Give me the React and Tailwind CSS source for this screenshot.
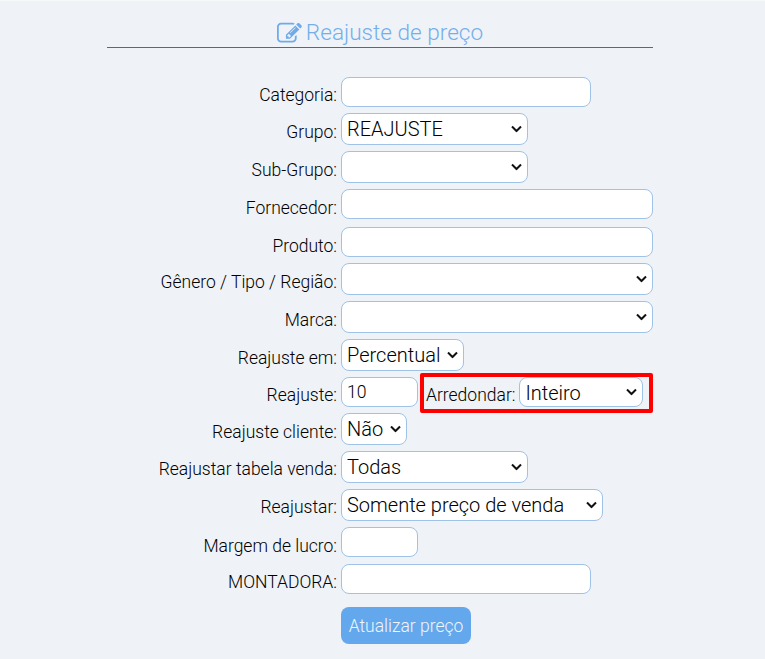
const inputCls = 'h-[30px] rounded-lg border border-[#9fc3e6] bg-white px-[5px] text-[17.6px] font-light text-black outline-none'
const selectCls = 'h-full w-full appearance-none rounded-lg border border-[#9fc3e6] bg-white pl-[5px] text-[20px] font-light text-black outline-none'

function EditIcon() {
  return (
    <svg viewBox="0 0 1792 1792" className="h-[25px] w-[25px] fill-[#6fabeb]">
      <path d="M888 1184l116-116-152-152-116 116v56h96v96h56zm440-720q-16-16-33 1l-350 350q-17 17-1 33t33-1l350-350q17-17 1-33zm80 594v190q0 119-84.5 203.5t-203.5 84.5h-832q-119 0-203.5-84.5t-84.5-203.5v-832q0-119 84.5-203.5t203.5-84.5h832q63 0 117 25 15 7 18 23 3 17-9 29l-49 49q-14 14-32 8-23-6-45-6h-832q-66 0-113 47t-47 113v832q0 66 47 113t113 47h832q66 0 113-47t47-113v-126q0-13 9-22l64-64q15-15 35-7t20 29zm-96-738l288 288-672 672h-288v-288zm444 132l-92 92-288-288 92-92q28-28 68-28t68 28l152 152q28 28 28 68t-28 68z" />
    </svg>
  )
}

function Row({ label, children, className = '', labelPad = 'pt-[7px]' }) {
  return (
    <div className={'flex items-start ' + className}>
      <label className={'h-[30px] w-[234px] shrink-0 pr-[4px] text-right text-[17.5px] leading-[24px] font-light text-black ' + labelPad}>{label}</label>
      {children}
    </div>
  )
}

function Select({ width, value, options = [''], className = 'h-[32px]', textPad = 'pb-[4px]' }) {
  return (
    <div className={'relative shrink-0 ' + width + ' ' + className}>
      <select className={selectCls + ' ' + textPad} defaultValue={value}>
        {options.map(o => <option key={o}>{o}</option>)}
      </select>
      <svg viewBox="0 0 11 7" className="pointer-events-none absolute top-1/2 right-[6px] h-[7px] w-[11px] -translate-y-1/2 fill-none stroke-[#111] stroke-2">
        <path d="M1 1l4.5 4.5L10 1" />
      </svg>
    </div>
  )
}

export default function App() {
  return (
    <div className="h-[659px] overflow-hidden border-t border-t-[#f8f9fb] bg-[#eff2f7] font-['Roboto',sans-serif]">
      <div className="ml-[107px] w-[546px]">
        <h1 className="mt-[18px] flex h-[29px] items-center justify-center gap-[4px] border-b border-[#666] pt-[1px] text-[22.6px] leading-none font-light text-[#74afeb]">
          <EditIcon />
          Reajuste de preço
        </h1>

        <div className="mt-[29px]">
          <Row label="Categoria:" labelPad="pt-[6px]"><input className={inputCls + ' w-[250px]'} /></Row>
          <Row label="Grupo:" className="mt-[6px]"><Select width="w-[187px]" value="REAJUSTE" options={['REAJUSTE']} /></Row>
          <Row label="Sub-Grupo:" className="mt-[6px]"><Select width="w-[187px]" /></Row>
          <Row label="Fornecedor:" className="mt-[6px]"><input className={inputCls + ' w-[312px]'} /></Row>
          <Row label="Produto:" className="mt-[8px]"><input className={inputCls + ' w-[312px]'} /></Row>
          <Row label="Gênero / Tipo / Região:" className="mt-[6px]"><Select width="w-[312px]" /></Row>
          <Row label="Marca:" className="mt-[6px]"><Select width="w-[312px]" /></Row>
          <Row label="Reajuste em:" className="mt-[6px]"><Select width="w-[123px]" value="Percentual" options={['Percentual']} /></Row>
          <Row label="Reajuste:" className="mt-[6px] h-[30px]" labelPad="pt-[6px]">
            <input className={inputCls + ' w-[77px]'} defaultValue="10" />
            <div className="mt-[-4px] ml-[2px] flex h-[40px] w-[233px] shrink-0 items-center rounded-[2px] border-[4px] border-[#fe0000] pl-[2px]">
              <span className="pt-[4px] text-[17.5px] font-light text-black">Arredondar:</span>
              <div className="mb-[2px] ml-[4px]">
                <Select width="w-[124px]" className="h-[30px]" textPad="pb-[6px]" value="Inteiro" options={['Inteiro']} />
              </div>
            </div>
          </Row>
          <Row label="Reajuste cliente:" className="mt-[6px]"><Select width="w-[66px]" value="Não" options={['Não']} /></Row>
          <Row label="Reajustar tabela venda:" className="mt-[6px]" labelPad="pt-[6px]"><Select width="w-[187px]" value="Todas" options={['Todas']} /></Row>
          <Row label="Reajustar:" className="mt-[6px]" labelPad="pt-[6px]"><Select width="w-[262px]" value="Somente preço de venda" options={['Somente preço de venda']} /></Row>
          <Row label="Margem de lucro:" className="mt-[6px]"><input className={inputCls + ' w-[77px]'} /></Row>
          <Row label="MONTADORA:" className="mt-[7px]" labelPad="pt-[6px]"><input className={inputCls + ' w-[250px]'} /></Row>
          <div className="mt-[13px] pl-[234px]">
            <button className="h-[37px] w-[130px] rounded-lg bg-[#63a8ec] pt-[1px] text-[17.5px] font-light text-[#f0f5fb]">Atualizar preço</button>
          </div>
        </div>
      </div>
    </div>
  )
}
